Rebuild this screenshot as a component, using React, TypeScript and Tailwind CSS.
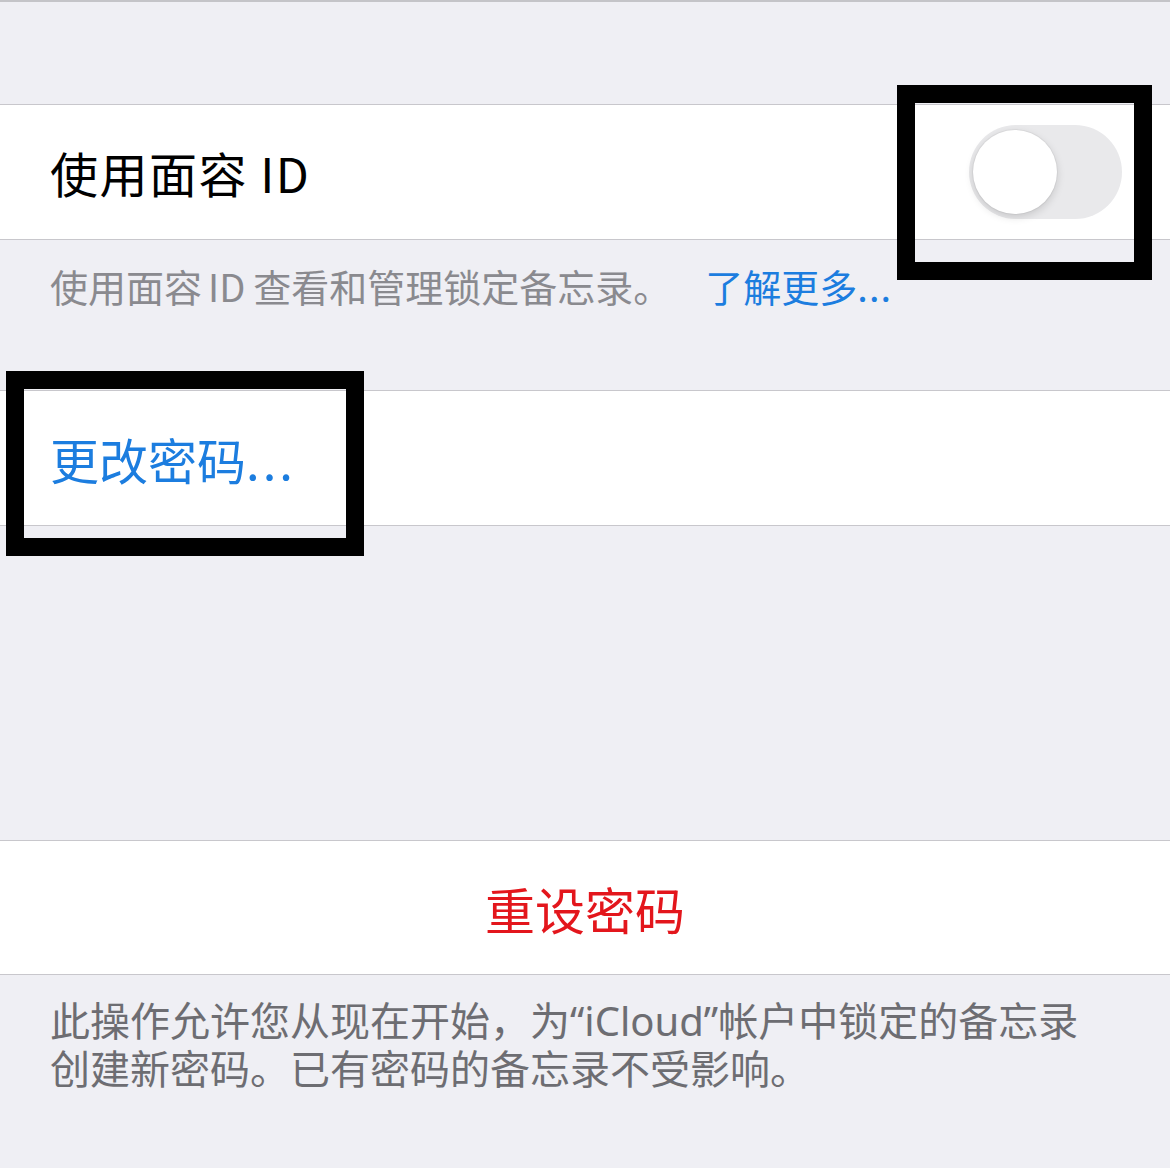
import React from "react";

const font = { fontFamily: '"Noto Sans CJK SC", "Noto Sans", sans-serif' };
const latin = { fontFamily: '"Noto Sans", "Noto Sans CJK SC", sans-serif' };

export default function App() {
  return (
    <div
      className="relative w-[1170px] h-[1168px] overflow-hidden bg-[#efeff4] border-t-2 border-[#c4c4c8]"
      style={font}
    >
      <div className="h-[102px]" />
      {/* Section 1 */}
      <div className="bg-white border-y border-[#c8c7cc] h-[136px] flex items-center justify-between pl-[50px] pr-[48px]">
        <span className="text-[48px] leading-none text-black tracking-[1.5px]">使用面容 ID</span>
        <div className="relative w-[153px] h-[94px] rounded-full bg-[#e9e9eb]">
          <div className="absolute left-[4px] top-[5px] w-[84px] h-[84px] rounded-full bg-white shadow-[0_3px_8px_rgba(0,0,0,0.15),0_0_0_1px_rgba(0,0,0,0.04)]" />
        </div>
      </div>
      {/* Footer 1 */}
      <div className="h-[150px] pl-[50px] pt-[22px]">
        <p className="text-[38px] leading-[48px] text-[#8a8a8f] whitespace-nowrap">
          使用面容<span className="ml-[6px] mr-[8px]">ID</span>查看和管理锁定备忘录。<span className="ml-[34px] text-[#1c7ddf]">了解更多<span className="tracking-[1px]">...</span></span>
        </p>
      </div>
      {/* Section 2 */}
      <div className="bg-white border-y border-[#c8c7cc] h-[136px] flex items-center pl-[50px]">
        <span className="text-[49px] leading-none text-[#1c7ddf]">
          更改密码<span className="tracking-[3px]">...</span>
        </span>
      </div>
      <div className="h-[314px]" />
      {/* Section 3 */}
      <div className="bg-white border-y border-[#c8c7cc] h-[135px] flex items-center justify-center">
        <span className="text-[50px] leading-none text-[#e3161c]">重设密码</span>
      </div>
      {/* Footer 2 */}
      <div className="pl-[50px] pt-[20px] pr-[20px] text-[40px] leading-[48px] text-[#6d6d72] whitespace-nowrap">
        <div className="h-[48px]">
          此操作允许您从现在开始，为<span style={latin}>“iCloud”</span>帐户中锁定的备忘录
        </div>
        <div className="h-[48px]">创建新密码。已有密码的备忘录不受影响。</div>
      </div>

      {/* Annotation boxes */}
      <div className="absolute left-[897px] top-[83px] w-[255px] h-[195px] border-[18px] border-black" />
      <div className="absolute left-[6px] top-[369px] w-[358px] h-[185px] border-[18px] border-black" />
    </div>
  );
}
